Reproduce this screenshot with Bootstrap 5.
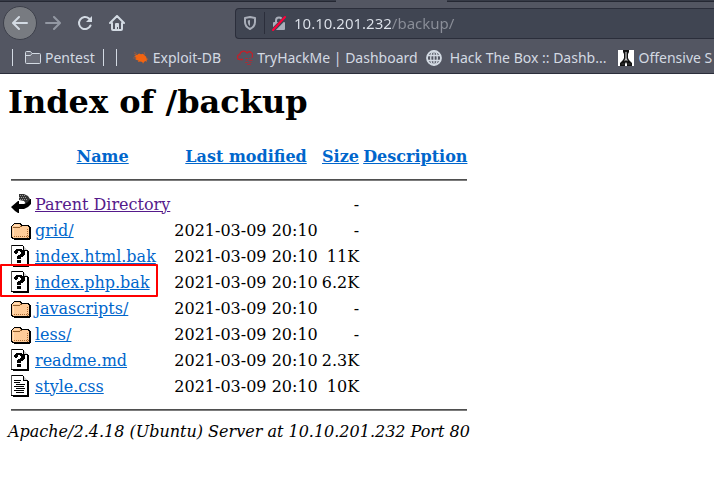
<!DOCTYPE html>
<html lang="en">
<head>
<meta charset="utf-8">
<meta name="viewport" content="width=device-width, initial-scale=1">
<title>Index of /backup</title>
<link href="https://cdn.jsdelivr.net/npm/bootstrap@5.3.0/dist/css/bootstrap.min.css" rel="stylesheet">
<style>
  body { font-family: "DejaVu Serif", serif; font-size: 16px; line-height: 19px; color: #000; background: #fff; }
  .chrome { font-family: "Noto Sans", sans-serif; font-size: 14px; line-height: 20px; color: #d3dae3; background: #535662; border-bottom: 1px solid #2b2e3b; }
  .tab-strip { height: 2px; background: #2f333f; }
  .tab-edge { height: 2px; }
  .tab-idle { width: 336px; background: #363a46; border-bottom: 1px solid #252833; }
  .tab-open { width: 111px; background: #535662; }
  .tab-rest { background: #363a46; border-bottom: 1px solid #252833; }
  .toolbar { height: 42px; padding-left: 3px; }
  .tool { width: 32px; height: 32px; color: #d3dae3; background: none; border: 0; }
  .tool-back { width: 34px; height: 34px; background: #787b81; border: 1px solid #3d404b; border-radius: 50%; }
  .tools { width: 232px; }
  .address-bar { height: 31px; background: #404552; border: 1px solid #2b2e3b; border-right: 0; border-radius: 4px 0 0 4px; padding-left: 8px; }
  .address-rule { width: 1px; height: 22px; background: #2b2e3b; margin: 0 7px 0 8px; }
  .address-input { font-size: 15px; border: 0; outline: 0; padding: 0; margin-left: 8px; height: 24px; min-width: 0;
    background: linear-gradient(to right, #dfe4ec 98px, #8b8f99 98px); -webkit-background-clip: text; background-clip: text; -webkit-text-fill-color: transparent; }
  .bookmarks { height: 29px; padding-left: 12px; padding-bottom: 2px; overflow: hidden; }
  .bookmarks a { color: inherit; text-decoration: none; white-space: nowrap; }
  .bar-rule { width: 1px; height: 17px; background: #d3dae3; flex: none; }
  .bookmarks svg { flex: none; }
  .listing { padding: 10px 8px 24px; }
  .listing h1 { font-size: 32px; line-height: 37px; font-weight: 700; margin-bottom: 21px; }
  .files { border-collapse: separate; border-spacing: 2px; }
  .files th, .files td { padding: 1px; height: 24px; white-space: nowrap; vertical-align: middle; }
  .files th { text-align: center; }
  .files .rule-cell { height: 20px; }
  .files svg { display: block; }
  .listing a { color: #0066cc; }
  .listing a.seen { color: #551a8b; }
  .files hr { margin: 8px 0; height: 2px; border: 0; border-top: 1px solid #4f4f4f; background: #7c7c7c; opacity: 1; }
  .marked { position: relative; }
  .marked::after { content: ""; position: absolute; left: -10px; top: -6px; width: 158px; height: 33px; border: 2px solid #f00; border-radius: 1px; pointer-events: none; }
</style>
</head>
<body>
<svg width="0" height="0" class="position-absolute" aria-hidden="true">
  <symbol id="folder" viewBox="0 0 20 22" shape-rendering="crispEdges">
    <path d="M2 5h1V4h7v1h1v1h7v1h1v1h1v12h-1v1H3v-1H1v-1H0V7h1V6h1z" fill="#000"/>
    <path d="M3 5h6v1h1v1h7v1h1v11H2v-1H1V7h1V6h1z" fill="#fc9"/>
    <path d="M2 8h7v1H2zM9 7h2v1H9z" fill="#8f5c2b"/>
    <path d="M3 17.500h15" stroke="#a96c36" stroke-dasharray="1 1"/>
    <path d="M16.500 10v9" stroke="#a96c36" stroke-dasharray="1 1"/>
    <path d="M3 6h5v1H3zM2 9h1v8H2z" fill="#ffe0bd"/>
  </symbol>
  <symbol id="sheet" viewBox="0 0 20 22" shape-rendering="crispEdges">
    <path d="M0 0h12v1h1v1h1v1h1v1h1v1h1v1h1v16H2v-1H0z" fill="#000"/>
    <path d="M1 1h11v5h4v14H1z" fill="#fff"/>
    <path d="M0 0h1v20H0z" fill="#555"/>
    <path d="M12 1v5h4V5h-3V1z" fill="#000"/>
    <path d="M13 2h1v1h1v1h1v1h-3z" fill="#ccc"/>
  </symbol>
  <symbol id="unknown" viewBox="0 0 20 22" shape-rendering="crispEdges">
    <use href="#sheet" width="20" height="22"/>
    <path d="M5 4h6v1h2v1h1v4h-1v1h-1v1h-2v2H6v-3h1v-1h2V9h1V7H9V6H7v2H6v1H4V8H3V6h1V5h1zM6 15h4v3H6z" fill="#000"/>
  </symbol>
  <symbol id="text" viewBox="0 0 20 22" shape-rendering="crispEdges">
    <use href="#sheet" width="20" height="22"/>
    <path d="M3 5.500h7M3 7.500h6M5 9.500h9M3 11.500h10M5 13.500h9M3 15.500h10M5 17.500h8" stroke="#000" fill="none"/>
  </symbol>
  <symbol id="back" viewBox="0 0 20 22">
    <path d="M8 1h5l4 2 2 3-1 3-3 2-2-3-5-1z" fill="#333"/>
    <path d="M9 2.500h5M8 4.500h8M9 6.500h7" stroke="#999" stroke-dasharray="1 1" fill="none"/>
    <path d="M0 14l7-6h1v3h5l4-2 2-3h1v5l-3 3-4 2H8v4H7l-3-2z" fill="#000"/>
  </symbol>
</svg>

<header class="chrome">
  <div class="tab-strip d-flex"><span class="tab-edge tab-idle"></span><span class="tab-edge tab-open"></span><span class="tab-edge tab-rest flex-grow-1"></span></div>
  <div class="toolbar d-flex align-items-center">
    <div class="tools d-flex align-items-center flex-shrink-0">
      <button type="button" class="tool tool-back d-flex align-items-center justify-content-center p-0" aria-label="Back">
        <svg width="16" height="16" viewBox="0 0 16 16" fill="none" stroke="currentColor" stroke-width="2" stroke-linecap="round" stroke-linejoin="round"><path d="M15 8H1.500M7 2L1 8l6 6"/></svg>
      </button>
      <button type="button" class="tool d-flex align-items-center justify-content-center p-0 opacity-50" aria-label="Forward">
        <svg width="16" height="16" viewBox="0 0 16 16" fill="none" stroke="currentColor" stroke-width="2" stroke-linecap="round" stroke-linejoin="round"><path d="M1 8h13.500M9 2l6 6-6 6"/></svg>
      </button>
      <button type="button" class="tool d-flex align-items-center justify-content-center p-0" aria-label="Reload">
        <svg width="16" height="16" viewBox="0 0 16 16" fill="none" stroke="currentColor" stroke-width="2" stroke-linecap="round"><path d="M13.500 10.500A6 6 0 1 1 12 3.600l1.500 1.500"/><path d="M15 1v6H9z" fill="currentColor" stroke="none"/></svg>
      </button>
      <button type="button" class="tool d-flex align-items-center justify-content-center p-0" aria-label="Home">
        <svg width="16" height="16" viewBox="0 0 16 16" fill="none" stroke="currentColor" stroke-width="2" stroke-linecap="round" stroke-linejoin="round"><path d="M1 8l7-7 7 7M3 8v6q0 1 1 1h8q1 0 1-1V8"/><path d="M6 15V9q0-1 1-1h2q1 0 1 1v6h-1v-3H8v3z" fill="currentColor" stroke="none"/></svg>
      </button>
    </div>
    <div class="address-bar d-flex align-items-center flex-grow-1">
      <svg width="12" height="14" viewBox="0 0 12 14" fill="none" stroke="#a9aeb9" stroke-width="2" aria-hidden="true"><path d="M6 1l5 1v4c0 3-2 5.500-5 7-3-1.500-5-4-5-7V2z" stroke-linejoin="round"/><path d="M6 4v6C4.500 9 3.800 7.500 3.800 6V4.400z" fill="#a9aeb9" stroke="none"/></svg>
      <span class="address-rule"></span>
      <svg width="14" height="15" viewBox="0 0 14 15" aria-hidden="true"><path d="M4 7V4.500a3 3 0 0 1 6 0V7" fill="none" stroke="#a9aeb9" stroke-width="2"/><rect x="1" y="6" width="12" height="8" rx="1" fill="#a9aeb9"/><path d="M0 15L14 1" stroke="#404552" stroke-width="4"/><path d="M1 14L13 1" stroke="#ff0039" stroke-width="2" stroke-linecap="round"/></svg>
      <input class="address-input flex-grow-1" type="text" value="10.10.201.232/backup/" aria-label="Address" spellcheck="false">
    </div>
  </div>
  <nav class="bookmarks d-flex align-items-center" aria-label="Bookmarks">
    <span class="bar-rule"></span>
    <a href="#" class="d-flex align-items-center ms-2 ps-1 gap-1"><svg width="16" height="15" viewBox="0 0 16 15" fill="#6b6e79" stroke="#d3dae3"><path d="M.5 12.500v-10q0-1 1-1h4l1.500 2h7.500q1 0 1 1v8q0 1-1 1h-13q-1 0-1-1z"/><path d="M.5 5.500h5l1.500-2"/></svg><span>Pentest</span></a>
    <span class="bar-rule ms-2 me-1"></span><span class="bar-rule ms-2"></span>
    <a href="#" class="d-flex align-items-center ms-3 gap-1"><svg width="16" height="16" viewBox="0 0 16 16"><path d="M1 4l3 1 2-1.500 2 .7 2-.4 1.500 1.500 1.700 1.400.3 1.800 2 .5-2 .8.500 2-1.500-.9-1.500 1.200-1 1.700-.7-1.800-2.300-.5-2 .5.600-1.500-2-.6L2 9l1.500-1L1 6.500l2-.5z" fill="#f26411"/><path d="M1 2l3 2M0 8h3M11 2l1 3" stroke="#a95b3c" stroke-width=".7"/></svg><span>Exploit-DB</span></a>
    <a href="#" class="d-flex align-items-center ms-3 gap-1"><svg width="16" height="16" viewBox="0 0 16 16" fill="none"><path d="M6 9.500H3a2.400 2.400 0 0 1-.3-4.800A4 4 0 0 1 10 3a3.200 3.200 0 0 1 4.700 4.500" stroke="#c2202a" stroke-width="1.300"/><path d="M8 8.500h3M12 8.500h2M9 10.500h1M11.500 10.500h4M8 12.500h3M12.500 12.500h2M10 14.500h4" stroke="#a3303a" stroke-width="1.200"/></svg><span>TryHackMe | Dashboard</span></a>
    <a href="#" class="d-flex align-items-center ms-2 gap-2"><svg width="16" height="16" viewBox="0 0 16 16" fill="none" stroke="#d3dae3" stroke-width="1.300"><circle cx="8" cy="8" r="7" stroke-width="1.800"/><ellipse cx="8" cy="8" rx="3.300" ry="7"/><path d="M8 1v14M1.500 5.500h13M1.500 10.500h13"/></svg><span>Hack The Box :: Dashb...</span></a>
    <a href="#" class="d-flex align-items-center ms-2 ps-1 gap-1"><svg width="16" height="16" viewBox="0 0 16 16"><path d="M0 0h16v16H0z" fill="#fff"/><path d="M5 0h6v2l-1 2v4l1 2 3 3v3H9v-2l-1-2-1 2v2H2v-3l3-3 1-2V4L5 2z" fill="#111"/><path d="M7.500 2h1v6l1 3-1.500-1-1.500 1 1-3zM3.500 14h3M9.500 14h3" fill="#ddd" stroke="#888" stroke-width=".4"/></svg><span>Offensive S</span></a>
  </nav>
</header>

<main class="listing">
  <h1>Index of /backup</h1>
  <table class="files">
    <thead>
      <tr><th></th><th scope="col"><a href="#">Name</a></th><th scope="col"><a href="#">Last modified</a></th><th scope="col"><a href="#">Size</a></th><th scope="col"><a href="#">Description</a></th></tr>
      <tr><td class="rule-cell" colspan="5"><hr></td></tr>
    </thead>
    <tbody>
      <tr><td><svg width="20" height="22"><use href="#back"/></svg></td><td><a class="seen" href="#">Parent Directory</a></td><td></td><td class="text-end">-</td><td></td></tr>
      <tr><td><svg width="20" height="22"><use href="#folder"/></svg></td><td><a href="#">grid/</a></td><td>2021-03-09 20:10</td><td class="text-end">-</td><td></td></tr>
      <tr><td><svg width="20" height="22"><use href="#unknown"/></svg></td><td><a href="#">index.html.bak</a></td><td>2021-03-09 20:10</td><td class="text-end">11K</td><td></td></tr>
      <tr><td class="marked"><svg width="20" height="22"><use href="#unknown"/></svg></td><td><a href="#">index.php.bak</a></td><td>2021-03-09 20:10</td><td class="text-end">6.2K</td><td></td></tr>
      <tr><td><svg width="20" height="22"><use href="#folder"/></svg></td><td><a href="#">javascripts/</a></td><td>2021-03-09 20:10</td><td class="text-end">-</td><td></td></tr>
      <tr><td><svg width="20" height="22"><use href="#folder"/></svg></td><td><a href="#">less/</a></td><td>2021-03-09 20:10</td><td class="text-end">-</td><td></td></tr>
      <tr><td><svg width="20" height="22"><use href="#unknown"/></svg></td><td><a href="#">readme.md</a></td><td>2021-03-09 20:10</td><td class="text-end">2.3K</td><td></td></tr>
      <tr><td><svg width="20" height="22"><use href="#text"/></svg></td><td><a href="#">style.css</a></td><td>2021-03-09 20:10</td><td class="text-end">10K</td><td></td></tr>
    </tbody>
    <tfoot>
      <tr><td class="rule-cell" colspan="5"><hr></td></tr>
    </tfoot>
  </table>
  <address class="fst-italic mb-0">Apache/2.4.18 (Ubuntu) Server at 10.10.201.232 Port 80</address>
</main>
<script src="https://cdn.jsdelivr.net/npm/bootstrap@5.3.0/dist/js/bootstrap.bundle.min.js"></script>
</body>
</html>
